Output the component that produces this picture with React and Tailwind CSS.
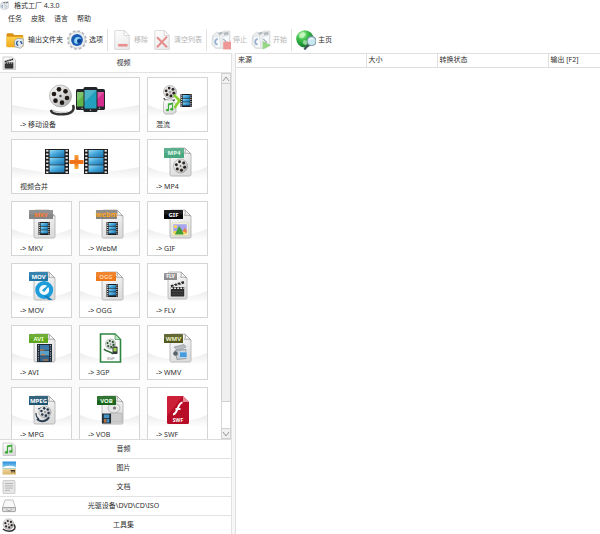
import React from "react";

/* ---------- shared drawing parts ---------- */

function Defs() {
  return (
    <svg className="absolute h-0 w-0" aria-hidden="true">
      <defs>
        <linearGradient id="paper" x1="0" y1="0" x2="0.4" y2="1">
          <stop offset="0" stopColor="#ffffff" />
          <stop offset="1" stopColor="#dcdcdc" />
        </linearGradient>
        <linearGradient id="swoosh" x1="0" y1="0" x2="0" y2="1">
          <stop offset="0" stopColor="#ececec" />
          <stop offset="1" stopColor="#ffffff" />
        </linearGradient>
        <linearGradient id="frame" x1="0" y1="0" x2="1" y2="1">
          <stop offset="0" stopColor="#9bdcf8" />
          <stop offset="0.5" stopColor="#3fa3d8" />
          <stop offset="1" stopColor="#1b6ea8" />
        </linearGradient>
        <linearGradient id="metal" x1="0" y1="0" x2="1" y2="1">
          <stop offset="0" stopColor="#fafafa" />
          <stop offset="0.5" stopColor="#dadada" />
          <stop offset="1" stopColor="#a0a0a0" />
        </linearGradient>
        <linearGradient id="orange" x1="0" y1="0" x2="0" y2="1">
          <stop offset="0" stopColor="#f9a640" />
          <stop offset="0.5" stopColor="#ee6a13" />
          <stop offset="1" stopColor="#f8b03c" />
        </linearGradient>
        <linearGradient id="folder" x1="0" y1="0" x2="0" y2="1">
          <stop offset="0" stopColor="#ffd04a" />
          <stop offset="1" stopColor="#f0a91c" />
        </linearGradient>
        <radialGradient id="globe" cx="0.35" cy="0.25" r="0.8">
          <stop offset="0" stopColor="#c4f7b8" />
          <stop offset="0.4" stopColor="#3cc04a" />
          <stop offset="1" stopColor="#0b6e2a" />
        </radialGradient>
        <linearGradient id="sky" x1="0" y1="0" x2="0" y2="1">
          <stop offset="0" stopColor="#2b8fdc" />
          <stop offset="0.5" stopColor="#8fd0ee" />
          <stop offset="0.6" stopColor="#ecd49a" />
          <stop offset="1" stopColor="#d8b468" />
        </linearGradient>
      </defs>
    </svg>
  );
}

function Reel({ cx, cy, r, hole = "#2b2522" }) {
  const holes = [0, 1, 2, 3, 4, 5].map((i) => {
    const a = (i * Math.PI) / 3 + 0.3;
    return [cx + Math.cos(a) * r * 0.62, cy + Math.sin(a) * r * 0.62];
  });
  return (
    <g>
      <circle cx={cx} cy={cy} r={r} fill="url(#metal)" stroke="#999" strokeWidth="0.6" />
      {holes.map(([x, y], i) => (
        <circle key={i} cx={x} cy={y} r={r * 0.21} fill={hole} />
      ))}
      <circle cx={cx} cy={cy} r={r * 0.11} fill="#444" />
    </g>
  );
}

function Film({ x, y, w, h, frames = 3, holes = 6 }) {
  const edge = w * 0.19;
  const fh = (h - 2) / frames;
  const step = h / holes;
  return (
    <g>
      <rect x={x} y={y} width={w} height={h} fill="#1d1d1f" />
      {Array.from({ length: frames }, (_, i) => (
        <rect key={i} x={x + edge} y={y + 1 + i * fh} width={w - edge * 2} height={fh - 0.6} fill="url(#frame)" />
      ))}
      {Array.from({ length: holes }, (_, i) => (
        <g key={i} fill="#e8e8e8">
          <rect x={x + edge * 0.25} y={y + step * (i + 0.25)} width={edge * 0.5} height={step * 0.5} />
          <rect x={x + w - edge * 0.75} y={y + step * (i + 0.25)} width={edge * 0.5} height={step * 0.5} />
        </g>
      ))}
    </g>
  );
}

function Doc({ x = 22, y = 8, w = 21, h = 28 }) {
  const f = 6;
  return (
    <g stroke="#b4b4b4" strokeWidth="0.9">
      <path
        d={`M${x + 1.5} ${y}H${x + w - f}L${x + w} ${y + f}V${y + h - 1.5}q0 1.5 -1.5 1.5H${x + 1.5}q-1.5 0 -1.5 -1.5V${y + 1.5}q0 -1.5 1.5 -1.5z`}
        fill="url(#paper)"
      />
      <path d={`M${x + w - f} ${y}q1 3.5 -0.4 5.4q3 -0.8 6.4 0.6z`} fill="#f6f6f6" stroke="#a5a5a5" />
    </g>
  );
}

function Tag({ x = 17, y = 8, w = 19, h = 9, fill, text, color = "#fff", size = 6 }) {
  return (
    <g>
      <rect x={x} y={y} width={w} height={h} rx="0.5" fill={fill} />
      <rect x={x} y={y} width={w} height={h / 2} fill="#fff" opacity="0.1" />
      <text x={x + w / 2} y={y + h / 2 + size * 0.36} textAnchor="middle" fontSize={size} fontWeight="700" fill={color}>
        {text}
      </text>
    </g>
  );
}

function Note({ x, y, s = 1, color = "#39a935" }) {
  return (
    <g transform={`translate(${x} ${y}) scale(${s})`} fill={color}>
      <path d="M2.4 1L7.6 0V1.8L3.5 2.7V7.5H2.4zM6.6 1.2H7.6V6.6H6.6z" />
      <ellipse cx="2" cy="7.6" rx="1.6" ry="1.2" />
      <ellipse cx="6.2" cy="6.7" rx="1.6" ry="1.2" />
    </g>
  );
}

function Clapper({ x, y, s = 1 }) {
  return (
    <g transform={`translate(${x} ${y}) scale(${s})`}>
      <path d="M0.5 4.2L13.6 0L14.2 2.4L1.2 6z" fill="#222" />
      <path d="M3 3.5L5 4.8M6.4 2.4L8.4 3.8M9.8 1.3L11.8 2.8" stroke="#eee" strokeWidth="1.1" />
      <rect x="0.8" y="6" width="13.4" height="9.6" rx="0.6" fill="#2e2e2e" />
      <path d="M1 7.2H14" stroke="#eee" strokeWidth="1.5" strokeDasharray="1.8 1.3" />
      <path d="M2 10.5H13M2 13H13" stroke="#666" strokeWidth="0.5" />
    </g>
  );
}

function Phone({ x, y, w, h, screen }) {
  return (
    <g>
      <rect x={x} y={y} width={w} height={h} rx="1.6" fill="#22262a" />
      <rect x={x + 1} y={y + 3} width={w - 2} height={h - 6.5} fill={screen} />
      <path d={`M${x + 1} ${y + 3}H${x + w - 1}L${x + 1} ${y + h * 0.6}z`} fill="#fff" opacity="0.2" />
      <circle cx={x + w / 2} cy={y + h - 1.8} r="0.8" fill="#aaa" />
    </g>
  );
}

/* ---------- tile pictures ---------- */

const Devices = () => (
  <g>
    <path d="M39 32c0 4 8 5 15 4c6-1 9-4 7-9" fill="none" stroke="#333" strokeWidth="2.4" />
    <path d="M39 31c3 3 11 4 17 3" fill="none" stroke="#aaa" strokeWidth="0.8" />
    <Reel cx={48.5} cy={18} r={11} hole="#1f1a18" />
    <Phone x={64} y={11} w={12} h={21} screen="#5fb548" />
    <Phone x={82} y={11} w={11} h={21} screen="#d42d8d" />
    <Phone x={71.5} y={9} w={14} h={25} screen="#23a0bd" />
  </g>
);

const Mux = () => (
  <g>
    <path d="M16 20c0 3 6 3 11 2" fill="none" stroke="#555" strokeWidth="1.3" />
    <Reel cx={22} cy={14} r={6.5} />
    <path d="M17 22H24L28 26V34L25 36H17L15.5 34V24z" fill="url(#paper)" stroke="#aaa" strokeWidth="0.7" />
    <Note x={17.5} y={24.5} s={1} />
    <path d="M26 17L31.5 22.5L26.5 30M31 22.5H36" fill="none" stroke="#8ad12f" strokeWidth="2.6" />
    <Film x={32.5} y={16} w={11.5} h={13} />
  </g>
);

const Merge = () => (
  <g>
    <Film x={33} y={9} w={24} h={25} holes={7} />
    <Film x={72} y={9} w={24} h={25} holes={7} />
    <path d="M62.5 15H66.5V20H71.5V24H66.5V29H62.5V24H57.5V20H62.5z" fill="url(#orange)" />
  </g>
);

const Mp4 = () => (
  <g>
    <Doc />
    <Reel cx={32.5} cy={26} r={7} />
    <Tag x={16} w={20} h={10} fill="#4aa880" text="MP4" color="#e2f8ec" />
  </g>
);

const Mkv = () => (
  <g>
    <Doc />
    <Film x={26.5} y={20} w={11.5} h={13} />
    <Tag w={24} fill="#858585" text="MKV" color="#ff7a30" />
  </g>
);

const Webm = () => (
  <g>
    <Doc />
    <Film x={26.5} y={20} w={11.5} h={13} />
    <Tag x={16} w={21} fill="#85827c" text="webm" color="#ffa51c" size={7} />
  </g>
);

const Gif = () => (
  <g>
    <Doc />
    <rect x="24" y="21" width="16" height="12.5" fill="#fffef2" stroke="#cfcf9f" strokeWidth="0.6" />
    <rect x="25.2" y="22.2" width="13.6" height="7" fill="#a7a5ee" />
    <rect x="25.2" y="29" width="13.6" height="3.4" fill="#e6d257" />
    <circle cx="27.5" cy="24.5" r="1.6" fill="#ffd84a" />
    <path d="M27 32.4L31 24L34 28L35.5 32.4z" fill="#3f9d3a" />
    <path d="M34.5 29L37 26L38.8 28.5V31z" fill="#e57d4c" />
    <Tag x={16} fill="#050505" text="GIF" />
  </g>
);

const Mov = () => (
  <g>
    <Doc />
    <circle cx="32.2" cy="26" r="7" fill="#f2fafe" stroke="#1c9cdb" strokeWidth="4" />
    <path d="M30 26.2L35.6 21.6L36.6 22.6L32.2 28z" fill="#1c9cdb" />
    <path d="M35 31.5L40.5 36H36.5L32 32z" fill="#117fbd" />
    <Tag fill="#2277a5" text="MOV" />
  </g>
);

const Ogg = () => (
  <g>
    <Doc />
    <Film x={26.5} y={20} w={11.5} h={13} />
    <Tag x={16} w={20} fill="#f07818" text="OGG" color="#ffd3a6" />
  </g>
);

const Flv = () => (
  <g>
    <Doc x={20} w={19} h={27} />
    <Clapper x={22} y={17} s={1} />
    <Tag x={16} y={9} w={13} h={7} fill="#8c8c8c" text="FLV" size={5} />
  </g>
);

const Avi = () => (
  <g>
    <Doc />
    <rect x="25" y="18" width="15" height="18" fill="#1c2733" />
    <rect x="28" y="19" width="9" height="5" fill="#3d79a8" />
    <rect x="28" y="24.6" width="9" height="5" fill="#5ba0c8" />
    <rect x="28" y="30.2" width="9" height="5" fill="#34658d" />
    <path d="M28 24H32M29 28.8H33M31 34H36" stroke="#e07a2e" strokeWidth="1.1" />
    <path d="M26.5 19V36M38.5 19V36" stroke="#8ea1ad" strokeWidth="1.2" strokeDasharray="1.2 1.2" />
    <Tag fill="#5fa51d" text="AVI" color="#eaffcf" />
  </g>
);

const Gp3 = () => (
  <g>
    <path d="M20.5 8H35L40.5 13.5V36H20.5z" fill="#fdfdfd" stroke="#2e8540" strokeWidth="1.6" />
    <path d="M35 8V13.5H40.5z" fill="#bfe3c4" stroke="#2e8540" strokeWidth="0.6" />
    <path d="M24 23c2 3 7 2 9 5" fill="none" stroke="#2f6a3b" strokeWidth="1.6" />
    <Reel cx={30.5} cy={18} r={5} hole="#20582b" />
    <rect x="32.5" y="20.5" width="5" height="7.5" rx="0.8" fill="#33383a" />
    <rect x="33.4" y="21.8" width="3.2" height="3.6" fill="#9ed24a" />
    <text x="30.5" y="33.5" textAnchor="middle" fontSize="4" fill="#777">3GP</text>
  </g>
);

const Wmv = () => (
  <g>
    <Doc />
    <path d="M26 21L36 18.5L38 21L30 25z" fill="#b7bdc2" stroke="#7b8289" strokeWidth="0.5" />
    <path d="M27 24.5L38 23.5V32.5L29 33.5z" fill="#c8ced3" stroke="#737b82" strokeWidth="0.6" />
    <rect x="31.5" y="26" width="7.5" height="5.5" rx="0.6" fill="#459bdd" stroke="#dfeefa" strokeWidth="0.6" />
    <circle cx="27.5" cy="27.5" r="2.3" fill="#596168" />
    <Tag x={16} fill="#53591c" text="WMV" color="#eef0c8" />
  </g>
);

const Mpg = () => (
  <g>
    <Doc />
    <path d="M25 31c4 4 10 2 12-2" fill="none" stroke="#2a3c50" strokeWidth="2" />
    <path d="M26 21L30 19.5M24 25c0 3 1 5 3 6" fill="none" stroke="#2a3c50" strokeWidth="1.2" />
    <Reel cx={33} cy={24} r={6} hole="#23354a" />
    <Tag fill="#1f5470" text="MPEG" />
  </g>
);

const Vob = () => (
  <g>
    <Doc />
    <ellipse cx="34" cy="20" rx="6" ry="5" fill="#e6e6e6" stroke="#9a9a9a" strokeWidth="0.6" />
    <circle cx="34.5" cy="20" r="1.6" fill="#777" />
    <path d="M31 25H42V34H31z" fill="#cdcdcd" stroke="#a0a0a0" strokeWidth="0.5" />
    <rect x="22" y="25.5" width="9" height="10" fill="#22303b" />
    <rect x="23.8" y="26.5" width="5.4" height="3.6" fill="#4591c4" />
    <rect x="23.8" y="31" width="2.6" height="3.6" fill="#b8703b" />
    <rect x="26.6" y="31" width="2.6" height="3.6" fill="#4591c4" />
    <Tag fill="#19641c" text="VOB" color="#e7ffe2" />
  </g>
);

const Swf = () => (
  <g>
    <path d="M20.5 8H35L41 14V34.5Q41 36 39.5 36H20.5Q19 36 19 34.5V9.5Q19 8 20.5 8z" fill="#b80d26" />
    <path d="M19 9.5Q19 8 20.5 8H35L19 28z" fill="#cc2038" />
    <path d="M35 8V14H41z" fill="#e98a95" />
    <path d="M34.5 14.5c-5 0-4.5 11.5-9.5 12M27.5 21H32.5" fill="none" stroke="#fff" strokeWidth="2" />
    <text x="30" y="33.6" textAnchor="middle" fontSize="5" fontWeight="700" fill="#fff">SWF</text>
  </g>
);

const tiles = [
  { label: "-> 移动设备", Art: Devices, wide: true },
  { label: "混流", Art: Mux },
  { label: "视频合并", Art: Merge, wide: true },
  { label: "-> MP4", Art: Mp4 },
  { label: "-> MKV", Art: Mkv },
  { label: "-> WebM", Art: Webm },
  { label: "-> GIF", Art: Gif },
  { label: "-> MOV", Art: Mov },
  { label: "-> OGG", Art: Ogg },
  { label: "-> FLV", Art: Flv },
  { label: "-> AVI", Art: Avi },
  { label: "-> 3GP", Art: Gp3 },
  { label: "-> WMV", Art: Wmv },
  { label: "-> MPG", Art: Mpg },
  { label: "-> VOB", Art: Vob },
  { label: "-> SWF", Art: Swf },
];

function Tile({ label, Art, wide }) {
  const w = wide ? 127 : 59;
  return (
    <button
      type="button"
      className={`flex h-[55px] flex-col border border-[#d5d5d5] bg-white text-left ${wide ? "col-span-2" : ""}`}
    >
      <svg viewBox={`0 0 ${w} 42`} className="h-[42px] w-full shrink-0" aria-hidden="true">
        <path d={`M0 27Q${w / 2} 40 ${w} 27V39H0z`} fill="url(#swoosh)" />
        <Art />
      </svg>
      <span className="pl-2 leading-[10px]">{label}</span>
    </button>
  );
}

/* ---------- toolbar pictures ---------- */

const Converter = () => (
  <g>
    <path d="M1.5 5L5 2L8 3L12 1H17V14L13 16.5H4L0.8 13z" fill="#dfe3e6" stroke="#a3abb1" strokeWidth="0.6" />
    <path d="M6 3L9 1.5L11 2.5L8 5zM11 2.5L15.5 1.5L16 4L12 5z" fill="#7a828a" />
    <path d="M2 6L7.5 5.5L9 16H4zM10 6L16.5 5V13L11 15z" fill="#f5f7f9" stroke="#b0b6bb" strokeWidth="0.5" />
    <path d="M6 8c-3 1-3 4.500 0 5" fill="none" stroke="#3f6fa8" strokeWidth="1.5" />
    <path d="M11 8L14 11L12 13" fill="none" stroke="#59708c" strokeWidth="1.2" />
  </g>
);

const FolderArt = () => (
  <g>
    <path d="M0.5 4Q0.5 3 1.5 3H6L7.5 4.500H14.5Q15.500 4.500 15.500 5.500V15H0.5z" fill="#d99213" />
    <rect x="0.5" y="6" width="15" height="9.500" rx="1" fill="url(#folder)" />
    <path d="M7.500 10L10 7.500L15.500 8V14L13 16.500L8 15z" fill="#e4eaef" stroke="#8a949c" strokeWidth="0.6" />
    <path d="M11 10c-2 .5-2 3 0 4M13 10L14.500 12.500" fill="none" stroke="#2c5c98" strokeWidth="1.3" />
  </g>
);

const GearArt = () => (
  <g>
    <circle cx="9" cy="9" r="8" fill="none" stroke="#b4b8bc" strokeWidth="1.7" strokeDasharray="2.5 1.7" />
    <circle cx="9" cy="9" r="7.400" fill="#eceef0" stroke="#bcc0c4" strokeWidth="0.6" />
    <circle cx="9" cy="9" r="5.300" fill="#1a5bb5" />
    <path d="M6.500 11Q5.800 7 9.500 6.300Q12 6 13 8Q10.500 7 9.300 8.800Q8.600 10.500 10 12.300Q7.500 12.800 6.500 11z" fill="#8fd4f8" />
    <circle cx="11" cy="10" r="1.700" fill="#0d3f8c" />
  </g>
);

const PageArt = () => (
  <g stroke="#aaa" strokeWidth="0.7">
    <path d="M3 0.5H11L15.500 5V17.500H2.500V1z" fill="url(#paper)" />
    <path d="M11 0.5V5H15.500z" fill="#fff" />
  </g>
);

const RemoveArt = () => (
  <g>
    <PageArt />
    <rect x="5.500" y="12.500" width="8.500" height="2.400" fill="#d93535" />
  </g>
);

const ClearArt = () => (
  <g>
    <PageArt />
    <path d="M4.500 6.500L13.500 15.500M13.500 6L4.500 15.500" stroke="#d02f2f" strokeWidth="1.8" />
  </g>
);

const StopArt = () => (
  <g>
    <Converter />
    <rect x="11" y="10.500" width="7" height="7" fill="#e04343" />
  </g>
);

const StartArt = () => (
  <g>
    <Converter />
    <path d="M10.500 10L18 13.800L10.500 17.600z" fill="#3fb81f" />
  </g>
);

const HomeArt = () => (
  <g>
    <circle cx="8" cy="8" r="7.800" fill="url(#globe)" />
    <path d="M3 4L7 1.500L9 4L6 7.500L3 7zM7 9L11 10L9 14L6 12z" fill="#d8ffd0" opacity="0.6" />
    <path d="M11 13.500L7.500 17.500" stroke="#45545c" strokeWidth="2" />
    <circle cx="14" cy="10" r="4" fill="#c9e8f4" stroke="#7b97a5" strokeWidth="1" />
    <path d="M12 9Q13.500 7 15.500 8" fill="none" stroke="#fff" strokeWidth="1" />
  </g>
);

const toolGroups = [
  [
    { label: "输出文件夹", Art: FolderArt },
    { label: "选项", Art: GearArt },
  ],
  [
    { label: "移除", Art: RemoveArt, disabled: true },
    { label: "清空列表", Art: ClearArt, disabled: true },
  ],
  [
    { label: "停止", Art: StopArt, disabled: true },
    { label: "开始", Art: StartArt, disabled: true },
  ],
  [{ label: "主页", Art: HomeArt }],
];

/* ---------- category pictures ---------- */

const SmallPage = () => (
  <path d="M1 1H10.5L13.5 4V13.5H1z" fill="url(#paper)" stroke="#bbb" strokeWidth="0.7" />
);

const VideoArt = () => (
  <g>
    <SmallPage />
    <Clapper x={2.2} y={2.4} s={0.64} />
  </g>
);

const AudioArt = () => (
  <g>
    <SmallPage />
    <Note x={2.4} y={2.4} s={1.05} />
  </g>
);

const PictureArt = () => (
  <g>
    <rect x="0.5" y="0.5" width="13.5" height="13" fill="url(#sky)" />
    <path d="M1 6.2Q7 3.5 13.8 6V7H1z" fill="#f4fbff" />
    <path d="M8.5 9.5H13M10 9.5V11.5M12.2 9.5V11.5" stroke="#3a3026" strokeWidth="1.2" />
  </g>
);

const TextArt = () => (
  <g>
    <rect x="1" y="0.5" width="12" height="13.2" rx="1" fill="#e6e6e6" stroke="#bcbcbc" strokeWidth="0.7" />
    <path d="M3 3.5H11M3 5.8H11M3 8.1H11M3 10.4H8" stroke="#b1b1b1" strokeWidth="0.9" />
  </g>
);

const DriveArt = () => (
  <g>
    <path d="M3 1H11L13.6 9H0.4z" fill="#f8f8f8" stroke="#a9a9a9" strokeWidth="0.7" />
    <rect x="0.4" y="8.6" width="13.2" height="4" rx="1" fill="#dedede" stroke="#7f7f7f" strokeWidth="0.7" />
    <path d="M4.5 10.5Q7 13 9.5 10.5" fill="#fff" stroke="#666" strokeWidth="0.6" />
  </g>
);

const ToolsArt = () => (
  <g>
    <path d="M1 11c3 3 9 3 11.5 0c1-2 0-4-1-5" fill="none" stroke="#333" strokeWidth="1.5" />
    <Reel cx={6.5} cy={6.2} r={5.3} />
  </g>
);

const categories = [
  { label: "音频", Art: AudioArt },
  { label: "图片", Art: PictureArt },
  { label: "文档", Art: TextArt },
  { label: "光驱设备\\DVD\\CD\\ISO", Art: DriveArt },
  { label: "工具集", Art: ToolsArt },
];

function Category({ label, Art, open }) {
  return (
    <button
      type="button"
      aria-expanded={!!open}
      className="flex h-[19px] w-full shrink-0 items-center border-b border-[#e2e2e2] bg-white pl-[2px] last:h-[18px] last:border-b-0"
    >
      <svg viewBox="0 0 14 14" className="size-[14px] shrink-0" aria-hidden="true">
        <Art />
      </svg>
      <span className="flex-1">{label}</span>
    </button>
  );
}

function ScrollButton({ label, d }) {
  return (
    <button
      type="button"
      aria-label={label}
      className="flex h-[11px] shrink-0 items-center justify-center border border-[#d0d0d0] bg-[#f0f0f0]"
    >
      <svg viewBox="0 0 8 6" className="h-[6px] w-2" fill="none" stroke="#9a9a9a" strokeWidth="1" aria-hidden="true">
        <path d={d} />
      </svg>
    </button>
  );
}

export default function App() {
  return (
    <div className="flex h-screen flex-col overflow-hidden bg-white font-['Noto_Sans','Noto_Sans_CJK_SC',sans-serif] text-[7px] leading-[10px] text-[#303030]">
      <Defs />
      <header className="shrink-0">
        <div className="flex h-[11px] items-center gap-[5px]">
          <svg viewBox="0 0 18 18" className="h-[9px] w-[9px]" aria-hidden="true">
            <Converter />
          </svg>
          <h1>格式工厂 4.3.0</h1>
        </div>
        <nav className="flex h-[15px] items-center gap-[9px] pl-2">
          {["任务", "皮肤", "语言", "帮助"].map((m) => (
            <button key={m} type="button">{m}</button>
          ))}
        </nav>
        <div className="flex h-[27px] items-center gap-1 pl-[6px]">
          {toolGroups.map((group, g) => (
            <React.Fragment key={g}>
              {g > 0 && <span className="h-[22px] w-px bg-[#e2e2e2]" />}
              {group.map(({ label, Art, disabled }) => (
                <button
                  key={label}
                  type="button"
                  disabled={disabled}
                  className="flex items-center gap-[2px] whitespace-nowrap disabled:text-[#b4b4b4]"
                >
                  <svg
                    viewBox="0 0 18 18"
                    className={`size-5 ${disabled ? "opacity-55" : ""}`}
                    aria-hidden="true"
                  >
                    <Art />
                  </svg>
                  {label}
                </button>
              ))}
            </React.Fragment>
          ))}
        </div>
      </header>

      <main className="flex min-h-0 flex-1 gap-[3px] bg-[#f7f7f7]">
        <aside className="flex w-[232px] shrink-0 flex-col border-r border-t border-[#e2e2e2]">
          <Category label="视频" Art={VideoArt} open />
          <div className="flex min-h-0 flex-1 border-b border-[#dcdcdc] bg-linear-to-r from-[#f8f8f8] to-white">
            <div className="min-w-0 flex-1 overflow-hidden pl-[11px] pr-[13px] pt-1">
              <div className="grid grid-cols-3 gap-[7px]">
                {tiles.map((t) => (
                  <Tile key={t.label} {...t} />
                ))}
              </div>
            </div>
            <div className="flex w-[10px] shrink-0 flex-col bg-white">
              <ScrollButton label="向上滚动" d="M1 5L4 1L7 5" />
              <div className="flex-[12] border-x border-b border-[#d0d0d0] bg-[#f0f0f0]" />
              <div className="flex-1 border-x border-[#d8d8d8]" />
              <ScrollButton label="向下滚动" d="M1 1L4 5L7 1" />
            </div>
          </div>
          {categories.map((c) => (
            <Category key={c.label} {...c} />
          ))}
        </aside>

        <section className="min-w-0 flex-1 border-l border-t border-[#dfdfdf] bg-white">
          <table className="w-full table-fixed border-collapse text-left">
            <colgroup>
              <col className="w-[130px]" />
              <col className="w-[71px]" />
              <col className="w-[111px]" />
              <col />
            </colgroup>
            <thead>
              <tr className="h-[13px] border-b border-[#dfdfdf]">
                {["来源", "大小", "转换状态", "输出 [F2]"].map((h) => (
                  <th key={h} scope="col" className="border-r border-[#dfdfdf] py-0 pl-[2px] font-normal last:border-r-0">
                    {h}
                  </th>
                ))}
              </tr>
            </thead>
          </table>
        </section>
      </main>
    </div>
  );
}
